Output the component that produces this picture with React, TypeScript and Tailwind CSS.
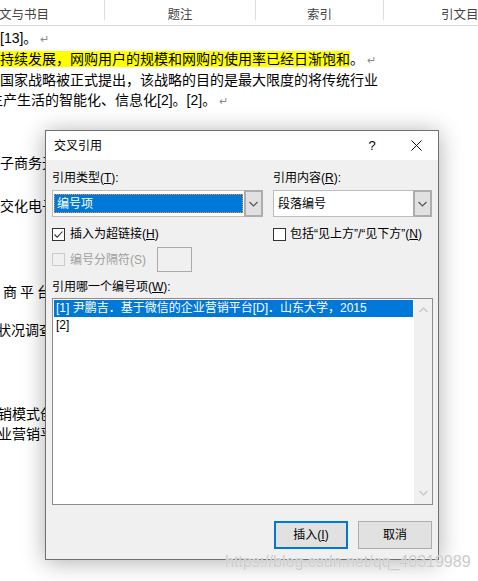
import React from "react";

function Mark() {
  return <span className="ml-[3px] text-[11px] text-[#8a8a8a]">↵</span>;
}

function Chevron({ up, className }: { up?: boolean; className?: string }) {
  return (
    <svg width="9" height="6" viewBox="0 0 9 6" className={className}>
      <polyline
        points={up ? "0.5,5 4.5,1 8.5,5" : "0.5,1 4.5,5 8.5,1"}
        fill="none"
        stroke="currentColor"
        strokeWidth="1.2"
      />
    </svg>
  );
}

function Box({ checked, disabled }: { checked?: boolean; disabled?: boolean }) {
  return (
    <div
      className={
        disabled
          ? "w-[13px] h-[13px] border border-[#cccccc] bg-[#f0f0f0] shrink-0"
          : "w-[13px] h-[13px] border border-[#333333] bg-white shrink-0 flex items-center justify-center"
      }
    >
      {checked && (
        <svg width="11" height="11" viewBox="0 0 11 11">
          <polyline points="1.5,5.5 4.2,8.2 9.5,2.5" fill="none" stroke="#333" strokeWidth="1.1" />
        </svg>
      )}
    </div>
  );
}

function Combo({ value, focused }: { value: string; focused?: boolean }) {
  return (
    <div className="flex h-[27px] border border-[#bdbdbd] bg-white">
      <div className="flex-1 flex items-center px-[1px] min-w-0">
        {focused ? (
          <div className="h-[19px] w-full bg-[#0078d7] text-white border border-dotted border-[#f7941d] flex items-center pl-[2px]">
            {value}
          </div>
        ) : (
          <span className="pl-[3px]">{value}</span>
        )}
      </div>
      <div className="w-[19px] -my-px -mr-px border-2 border-[#adadad] bg-[#e1e1e1] flex items-center justify-center text-[#555]">
        <Chevron />
      </div>
    </div>
  );
}

function Ribbon() {
  return (
    <div className="flex items-start h-[26px] border-b border-[#d9d9d9] text-[12.5px] text-[#444] whitespace-nowrap">
      <div className="w-[105px] shrink-0 h-[26px] pt-[4px] flex items-center -ml-px">文与书目</div>
      <div className="w-px shrink-0 h-[20px] bg-[#dedede]" />
      <div className="w-[150px] shrink-0 h-[26px] pt-[4px] flex items-center justify-center">题注</div>
      <div className="w-px shrink-0 h-[20px] bg-[#dedede]" />
      <div className="w-[127px] shrink-0 h-[26px] pt-[4px] flex items-center justify-center">索引</div>
      <div className="w-px shrink-0 h-[20px] bg-[#dedede]" />
      <div className="shrink-0 h-[26px] pt-[4px] flex items-center pl-[57px]">引文目录</div>
    </div>
  );
}

function Document() {
  return (
    <div className="flex flex-col text-[14px] leading-[20px] whitespace-nowrap pt-[2px]">
      <div>[13]。<Mark /></div>
      <div>
        <span className="bg-[#ffff00]">持续发展，网购用户的规模和网购的使用率已经日渐饱和</span>。<Mark />
      </div>
      <div>国家战略被正式提出，该战略的目的是最大限度的将传统行业</div>
      <div className="-ml-[11px]">生产生活的智能化、信息化[2]。[2]。<Mark /></div>
      <div className="mt-[42px]">子商务无</div>
      <div className="mt-[23px]">交化电子</div>
      <div className="mt-[66px] ml-[3px] tracking-[3px]">商平台</div>
      <div className="mt-[18px] -ml-[3px]">状况调查</div>
      <div className="mt-[64px] -ml-[2px]">销模式创</div>
      <div className="-ml-[2px]">业营销平</div>
    </div>
  );
}

function CrossRefDialog() {
  return (
    <div className="absolute left-[45px] top-[130px] w-[394px] border border-[#707070] bg-[#f0f0f0] shadow-[0_2px_22px_rgba(0,0,0,0.32)] text-[12px] text-black flex flex-col">
      <div className="h-[29px] bg-white flex items-center">
        <span className="flex-1 pl-[8px]">交叉引用</span>
        <div className="w-[44px] h-full flex items-center justify-center text-[13px]">?</div>
        <div className="w-[44px] h-full flex items-center justify-center">
          <svg width="11" height="11" viewBox="0 0 11 11">
            <path d="M0.5 0.5 L10.5 10.5 M10.5 0.5 L0.5 10.5" stroke="#111" strokeWidth="1" />
          </svg>
        </div>
      </div>

      <div className="pl-[6px] pr-[5px] pt-[10px] pb-[10px] flex flex-col">
        <div className="grid grid-cols-[211px_159px] gap-x-[10px] leading-[16px]">
          <div>引用类型(<span className="underline">T</span>):</div>
          <div>引用内容(<span className="underline">R</span>):</div>
        </div>
        <div className="grid grid-cols-[211px_159px] gap-x-[10px] mt-[4px]">
          <Combo value="编号项" focused />
          <Combo value="段落编号" />
        </div>
        <div className="grid grid-cols-[211px_159px] gap-x-[10px] mt-[8px] h-[16px]">
          <div className="flex items-center gap-[5px]">
            <Box checked />
            <span>插入为超链接(<span className="underline">H</span>)</span>
          </div>
          <div className="flex items-center gap-[4px]">
            <Box />
            <span>包括“见上方”/“见下方”(<span className="underline">N</span>)</span>
          </div>
        </div>
        <div className="flex items-center h-[25px] mt-[6px]">
          <Box disabled />
          <span className="w-[82px] shrink-0 pl-[5px] text-[#a0a0a0]">编号分隔符(S)</span>
          <div className="ml-[10px] w-[35px] h-[25px] border border-[#ababab] bg-[#f0f0f0]" />
        </div>
        <div className="mt-[7px] leading-[16px]">
          引用哪一个编号项(<span className="underline">W</span>):
        </div>
        <div className="mt-[3px] h-[207px] border border-[#8c8c8c] bg-white flex">
          <div className="flex-1 p-[1px] whitespace-nowrap">
            <div className="h-[17px] leading-[17px] pl-[2px] bg-[#0078d7] text-white">
              [1] 尹鹏吉．基于微信的企业营销平台[D]．山东大学，2015
            </div>
            <div className="h-[17px] leading-[17px] pl-[2px]">[2]</div>
          </div>
          <div className="w-[18px] bg-[#f0f0f0] flex flex-col items-center justify-between py-[8px] text-[#c4c4c4]">
            <Chevron up />
            <Chevron />
          </div>
        </div>
        <div className="flex justify-end gap-[10px] mt-[16px] pr-[1px]">
          <button className="w-[74px] h-[28px] bg-[#e1e1e1] border-2 border-[#0078d7] text-[12px]">
            插入(<span className="underline">I</span>)
          </button>
          <button className="w-[74px] h-[28px] bg-[#e1e1e1] border border-[#adadad] text-[12px]">取消</button>
        </div>
      </div>
    </div>
  );
}

export default function App() {
  return (
    <div className="relative w-[478px] h-[581px] overflow-hidden bg-white text-black font-['Liberation_Sans','Noto_Sans_CJK_SC',sans-serif]">
      <Ribbon />
      <Document />
      <CrossRefDialog />
      <div className="absolute left-[225px] top-[552px] text-[16px] leading-[20px] text-[#cbcbcb] font-['Liberation_Sans',Arial,sans-serif] [text-shadow:0_0_1px_rgba(255,255,255,0.9)] whitespace-nowrap">
        https://blog.csdn.net/qq_40319989
      </div>
    </div>
  );
}
